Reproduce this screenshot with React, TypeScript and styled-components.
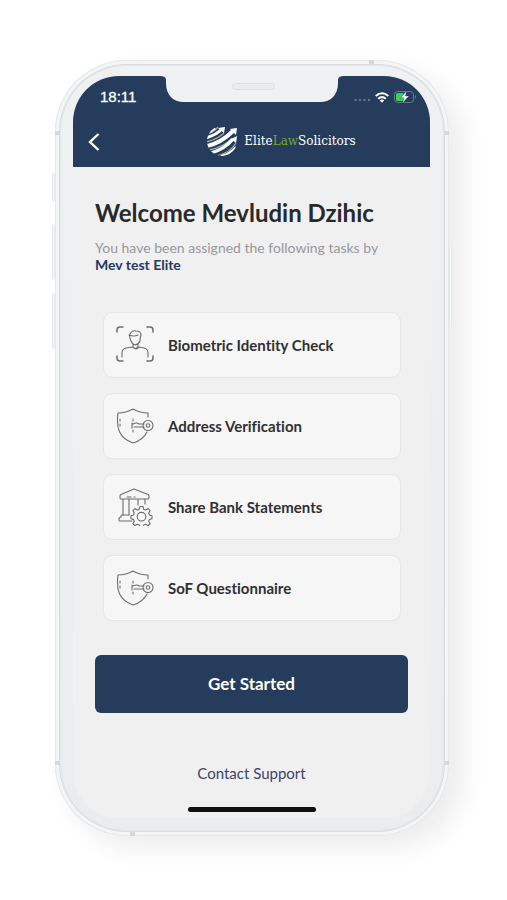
import React from "react";
import styled, { createGlobalStyle } from "styled-components";

const NAVY = "#263c5c";

const GlobalStyle = createGlobalStyle`
  * { box-sizing: border-box; }
  body {
    margin: 0;
    background: #fff;
    font-family: Lato, "Open Sans", sans-serif;
    font-variant-ligatures: none;
  }
`;

const Page = styled.main`
  display: flex;
  min-height: 100vh;
  padding: 60px 58px 64px 55px;
`;

const Phone = styled.div`
  position: relative;
  flex: 1;
  display: flex;
  padding: 16px 19px 18px 18px;
  border-radius: 72px;
  background: linear-gradient(#f0f1f3, #eaecee);
  box-shadow:
    inset 0 0 0 1px #e6e9ea,
    inset 0 0 0 4px #f4f6f6,
    inset 0 0 0 5px #d9dde0,
    inset 0 0 0 6px #e4e7ea,
    14px 12px 24px rgba(60, 60, 70, 0.09);
`;

const SideKey = styled.span<{ $side: "left" | "right"; $top: number; $length: number }>`
  position: absolute;
  ${(p) => p.$side}: -3px;
  top: ${(p) => p.$top}px;
  width: 3px;
  height: ${(p) => p.$length}px;
  border: 1px solid #e8ebec;
  border-radius: 2px;
  background: #f3f5f6;
`;

const Seam = styled.span<{ $x: "left" | "right"; $y: "top" | "bottom"; $flat?: boolean }>`
  position: absolute;
  ${(p) => p.$x}: ${(p) => (p.$flat ? 75 : 0)}px;
  ${(p) => p.$y}: ${(p) => (p.$flat ? 0 : 71)}px;
  width: 5px;
  height: 4px;
  background: #d6d9db;
`;

const Screen = styled.div`
  flex: 1;
  min-width: 0;
  display: flex;
  flex-direction: column;
  overflow: hidden;
  border-radius: 46px;
  background: #f0f0f1;
`;

const Header = styled.header`
  position: relative;
  height: 91px;
  color: #fff;
  background: ${NAVY};
`;

const Notch = styled.svg`
  position: absolute;
  top: 0;
  left: 50%;
  margin-left: -92px;
`;

const StatusBar = styled.div`
  display: flex;
  align-items: center;
  justify-content: space-between;
  height: 36px;
  padding: 6px 13px 0 27px;
`;

const Clock = styled.time`
  font: 500 15px/16px "Liberation Sans", sans-serif;
  -webkit-text-stroke: 0.3px #fff;
`;

const Indicators = styled.div`
  display: flex;
  align-items: center;
  gap: 5px;
`;

const NavBar = styled.nav`
  display: grid;
  grid-template-columns: 32px 1fr 32px;
  align-items: center;
  height: 55px;
  padding: 2px 4px 0;
`;

const BackButton = styled.button`
  display: flex;
  align-items: center;
  justify-content: center;
  width: 34px;
  height: 40px;
  padding: 2px 0 0;
  border: 0;
  color: inherit;
  background: none;
  cursor: pointer;
`;

const Brand = styled.div`
  display: flex;
  align-items: center;
  justify-content: center;
  gap: 5px;
  padding-left: 58px;
  font: 12px/16px "DejaVu Serif", serif;
  white-space: nowrap;
`;

const Accent = styled.span`
  color: #74a52c;
`;

const Content = styled.div`
  flex: 1;
  display: flex;
  flex-direction: column;
  padding: 30px 22px 6px;
`;

const Title = styled.h1`
  margin: 0;
  color: #29292b;
  font-size: 24px;
  line-height: 32px;
  font-weight: 700;
  white-space: nowrap;
`;

const Intro = styled.p`
  margin: 10px 0 0;
  color: #98989c;
  font-size: 14px;
  line-height: 17px;
`;

const Assigner = styled.strong`
  display: block;
  color: #263a60;
  font-weight: 700;
`;

const TaskList = styled.ul`
  display: grid;
  gap: 15px;
  margin: 39px 7px 0 8px;
  padding: 0;
  list-style: none;
`;

const Task = styled.li`
  display: flex;
  align-items: center;
  gap: 14px;
  height: 66px;
  padding: 0 12px;
  border: 1px solid #e6e6e8;
  border-radius: 9px;
  color: #303032;
  background: #f6f6f6;
  font-size: 15px;
  line-height: 20px;
  font-weight: 700;
`;

const StartButton = styled.button`
  height: 58px;
  margin-top: 34px;
  border: 0;
  border-radius: 6px;
  color: #fff;
  background: ${NAVY};
  font: 700 17px/24px Lato, sans-serif;
  font-variant-ligatures: none;
  cursor: pointer;
`;

const SupportLink = styled.a`
  align-self: center;
  margin-top: 50px;
  color: #3b4569;
  font-size: 15px;
  line-height: 20px;
  text-decoration: none;
`;

const HomeBar = styled.div`
  align-self: center;
  width: 128px;
  height: 5px;
  margin-top: 24px;
  border-radius: 3px;
  background: #101010;
`;

const Line = styled.svg`
  flex: none;
  fill: none;
  stroke: #6c6d6f;
  stroke-width: 1.1;
  stroke-linecap: round;
  stroke-linejoin: round;
`;

const FaceIcon = () => (
  <Line width="38" height="38" viewBox="0 0 38 38" aria-hidden="true">
    <path d="M1 6V4q0-3 3-3h3M31 1h3q3 0 3 3v2M37 30v2q0 3-3 3h-3M7 35H4q-3 0-3-3v-2" strokeWidth="1.500" />
    <path d="M14 12q-1-2 0-4 2-4 6-3 5 0 5 4l-1 4v2q-1 3-5 4-3-1-4-4zM13 9q5 2 9 0M17 18v3q2 3 5 0v-3" />
    <path d="M6 31v-4q0-4 4-5l7-1q3 4 6 0l5 1q4 1 4 5v4" />
  </Line>
);

const ShieldIcon = () => (
  <Line width="38" height="38" viewBox="0 0 38 38" aria-hidden="true">
    <path d="M32 10V6Q24 6 17 2 10 6 2 6C0 21 3 31 17 36c7-2 12-7 14-11" />
    <path d="M4 12v2M4 17v2M17 12v2M17 23v2M16 16v5M17 17q4-2 6 0h5M18 20h10" />
    <circle cx="32" cy="18.500" r="5" />
    <circle cx="32" cy="18.500" r="1.800" />
  </Line>
);

const BankIcon = () => (
  <Line width="38" height="38" viewBox="0 0 38 38" aria-hidden="true">
    <path d="M4 10v-2Q4 7 5 6.500L18 1l14 5.500q1 .500 1 1.500v2q0 1-1 1H5q-1 0-1-1zM11 9h4m3 0h1M7 11v16M13 11v16M22 12v5M29 11v5" />
    <path d="M16 33H4q-1 0-1-1v-2l2-1v-1q0-1 1-1h7" />
    <path d="M24 18.500h3l.7 2.700 2 .8 2.400-1.400 2 2-1.400 2.400.8 2 2.500.7v3l-2.500.7-.8 2 1.400 2.400-2 1.700-2.400-1.200-2 .8-.7 1.600h-3l-.7-1.600-2-.8-2.400 1.200-2-1.700 1.400-2.400-.8-2-2.500-.7v-3l2.500-.7.8-2-1.400-2.400 2-2 2.400 1.400 2-.8z" />
    <circle cx="25.500" cy="28.700" r="4.300" />
  </Line>
);

const Globe = () => (
  <svg width="34" height="32" viewBox="0 0 34 32" aria-hidden="true">
    <defs>
      <clipPath id="globe">
        <circle cx="17" cy="16" r="15" />
      </clipPath>
    </defs>
    <g clipPath="url(#globe)" fill="none">
      <g stroke="#a3a5a4" strokeWidth="1.300">
        <path d="M1 9Q8 8 13 2M1 17Q13 14 19 8M4 25Q19 22 26 14M11 31Q25 28 31 18" />
      </g>
      <g stroke="#fff">
        <path d="M1 13Q11 10 17 4" strokeWidth="3" />
        <path d="M2 21Q16 18 28 6" strokeWidth="4" />
        <path d="M6 28Q20 24 28 14" strokeWidth="3.200" />
        <path d="M16 31Q25 29 31 22" strokeWidth="2" />
        <path d="M4 7l6-4" strokeWidth="3" />
      </g>
    </g>
    <path d="M13 3l7-1-1 6zM25 4l7-1-1 7zM26 14l6-3-1 7z" fill="#fff" />
  </svg>
);

const tasks = [
  { label: "Biometric Identity Check", Icon: FaceIcon },
  { label: "Address Verification", Icon: ShieldIcon },
  { label: "Share Bank Statements", Icon: BankIcon },
  { label: "SoF Questionnaire", Icon: ShieldIcon },
];

export default function App() {
  return (
    <>
      <GlobalStyle />
      <Page>
        <Phone>
          <SideKey $side="left" $top={113} $length={28} />
          <SideKey $side="left" $top={164} $length={56} />
          <SideKey $side="left" $top={233} $length={56} />
          <SideKey $side="right" $top={182} $length={86} />
          <Seam $x="left" $y="top" />
          <Seam $x="right" $y="top" />
          <Seam $x="left" $y="bottom" />
          <Seam $x="right" $y="bottom" />
          <Seam $x="right" $y="top" $flat />
          <Seam $x="left" $y="bottom" $flat />
          <Screen>
            <Header>
              <Notch width="184" height="27" viewBox="0 0 184 27" aria-hidden="true">
                <path
                  d="M0 0h184q-6 0-6 4v3c0 12-7 19-18 19H24C13 26 6 19 6 7V4q0-4-6-4z"
                  fill="#f0f1f3"
                />
                <rect x="72.500" y="7.500" width="42" height="6" rx="3" fill="#ebecee" stroke="#dddfe1" />
              </Notch>
              <StatusBar>
                <Clock>18:11</Clock>
                <Indicators>
                  <svg width="16" height="12" viewBox="0 0 16 12" fill="#65758c" aria-hidden="true">
                    <circle cx="1.500" cy="9" r="1.200" />
                    <circle cx="6" cy="9" r="1.200" />
                    <circle cx="10.500" cy="9" r="1.200" />
                    <circle cx="15" cy="9" r="1.200" />
                  </svg>
                  <svg width="14" height="11" viewBox="0 0 14 11" fill="none" stroke="#fff" strokeWidth="2" aria-label="Wi-Fi">
                    <path d="M.7 4q6.300-5.500 12.600 0M3.200 6.700q3.800-3.200 7.600 0" />
                    <path d="M4.800 8.300q2.200-1.600 4.400 0L7 10.700z" fill="#fff" stroke="none" />
                  </svg>
                  <svg width="23" height="12" viewBox="0 0 23 12" aria-label="Battery charging">
                    <rect x=".5" y=".5" width="19" height="11" rx="3" fill="none" stroke="#697a91" />
                    <path d="M21 4q2 2 0 4z" fill="#697a91" />
                    <rect x="2" y="2" width="8" height="8" rx="1.500" fill="#36d158" />
                    <path d="M12.500 0L6.500 6.800H10L8.500 12l6.500-7h-3.500z" fill="#fff" stroke={NAVY} strokeWidth=".4" />
                  </svg>
                </Indicators>
              </StatusBar>
              <NavBar>
                <BackButton aria-label="Back">
                  <svg width="12" height="18" viewBox="0 0 12 18" fill="none" stroke="currentColor" strokeWidth="2.400" aria-hidden="true">
                    <path d="M10.500 1L2 9l8.500 8" />
                  </svg>
                </BackButton>
                <Brand>
                  <Globe />
                  <span>
                    Elite<Accent>Law</Accent>Solicitors
                  </span>
                </Brand>
              </NavBar>
            </Header>
            <Content>
              <Title>Welcome Mevludin Dzihic</Title>
              <Intro>
                You have been assigned the following tasks by
                <Assigner>Mev test Elite</Assigner>
              </Intro>
              <TaskList>
                {tasks.map(({ label, Icon }) => (
                  <Task key={label}>
                    <Icon />
                    {label}
                  </Task>
                ))}
              </TaskList>
              <StartButton>Get Started</StartButton>
              <SupportLink href="#support">Contact Support</SupportLink>
              <HomeBar />
            </Content>
          </Screen>
        </Phone>
      </Page>
    </>
  );
}
